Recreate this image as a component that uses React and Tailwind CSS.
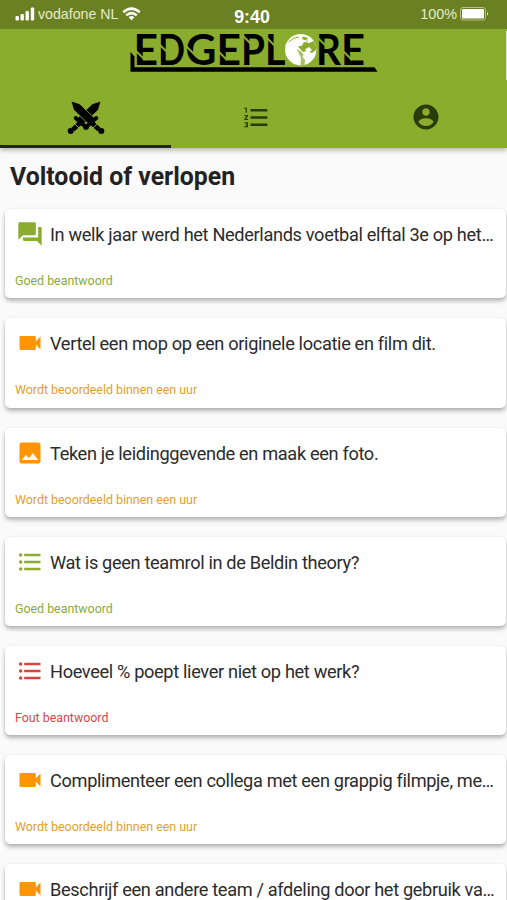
import React from 'react'
import { MdForum, MdFormatListBulleted, MdFormatListNumbered, MdImage, MdVideocam } from 'react-icons/md'

const GOOD = { label: 'Goed beantwoord', text: 'text-[#8aac37]', icon: 'text-[#8aad2f]' }
const PENDING = { label: 'Wordt beoordeeld binnen een uur', text: 'text-[#e2a02e]', icon: 'text-[#fd9602]' }
const WRONG = { label: 'Fout beantwoord', text: 'text-[#d3494b]', icon: 'text-[#d2473f]' }

const questions = [
  { title: 'In welk jaar werd het Nederlands voetbal elftal 3e op het…', Icon: MdForum, status: GOOD },
  { title: 'Vertel een mop op een originele locatie en film dit.', Icon: MdVideocam, status: PENDING },
  { title: 'Teken je leidinggevende en maak een foto.', Icon: MdImage, status: PENDING },
  { title: 'Wat is geen teamrol in de Beldin theory?', Icon: MdFormatListBulleted, status: GOOD },
  { title: 'Hoeveel % poept liever niet op het werk?', Icon: MdFormatListBulleted, status: WRONG },
  { title: 'Complimenteer een collega met een grappig filmpje, me…', Icon: MdVideocam, status: PENDING },
  { title: 'Beschrijf een andere team / afdeling door het gebruik va…', Icon: MdVideocam, status: PENDING },
]

// letter, x, advance width
const letters = [
  ['E', 133.5, 24.5],
  ['D', 158, 27],
  ['G', 185.5, 31],
  ['E', 216.5, 24.5],
  ['P', 241, 24],
  ['L', 265, 20.5],
  ['R', 316, 25],
  ['E', 341, 24],
]

function Wifi() {
  return <svg width="19" height="14" viewBox="0 0 19 14" fill="none" stroke="white" strokeWidth="2.5">
    <path d="M1.2 5.2Q9.5-2 17.8 5.2" />
    <path d="M4.2 8.4Q9.5 3.8 14.8 8.4" />
    <path d="M6.6 10.2Q9.5 7.9 12.4 10.2L9.5 13.3Z" fill="white" stroke="none" />
  </svg>
}

function StatusBar() {
  return <div className="grid h-[29px] grid-cols-3 items-center bg-[#6a8123] font-['Liberation_Sans',sans-serif] text-white">
    <div className="flex items-center pl-[15px]">
      <svg width="20" height="14" viewBox="0 0 20 14" fill="white">
        <rect x="0.5" y="9" width="3.4" height="4.4" rx="1" />
        <rect x="5.5" y="7" width="3.4" height="6.4" rx="1" />
        <rect x="10.5" y="4" width="3.4" height="9.4" rx="1" />
        <rect x="15.8" y="0.5" width="3.4" height="12.9" rx="1" />
      </svg>
      <span className="ml-[3px] mr-[4px] whitespace-nowrap text-[14.2px] text-[#e4eacb]">vodafone NL</span>
      <Wifi />
    </div>
    <span className="pt-[5px] pr-[3px] text-center text-[17.8px] leading-5 font-bold">9:40</span>
    <div className="flex items-center justify-end pr-[18px]">
      <span className="mr-[3px] text-[14.4px] text-[#e4eacb]">100%</span>
      <svg width="29" height="14" viewBox="0 0 29 14">
        <rect x="0.5" y="0.5" width="25" height="12.5" rx="2.5" fill="none" stroke="#b4c188" />
        <rect x="2" y="2" width="22" height="9.5" rx="1" fill="white" />
        <path d="M27 4.8Q29 6.8 27 8.8Z" fill="#e4eacb" />
      </svg>
    </div>
  </div>
}

function Logo() {
  return <svg className="ml-[130px] block overflow-visible" width="250" height="44" viewBox="130 29 250 44">
    {letters.map(([char, x, width]) => (
      <text key={x} x={x} y="65" textLength={width} lengthAdjust="spacingAndGlyphs" className="font-[Lato] text-[41.5px] font-bold">{char}</text>
    ))}
    {/* stencil cuts */}
    <path
      d="M134 49l11 11M158 43l12 12M185 45l11 11M216 49l11 11M241 34l10 10M265 36l10 10M316 36l10 10M341 49l11 11"
      stroke="#8aad2e"
      strokeWidth="1.8"
    />
    <path d="M130.5 52L134.5 56.5V67.3H374.5L377.5 71.8H130.5Z" />
    <circle cx="300.7" cy="49.7" r="15.7" fill="white" />
    <g fill="#8aad2e">
      <path d="M298 46.5L302 45.5 304 42 309 43 314 41 316 46 316 50 312 53 307 51 303 52 301 50Z" />
      <path d="M297 49L301 51.5 303.5 54 302.5 57 305 60 304.5 65.5 300.5 65 301 58 299 54Z" opacity=".75" />
      <path d="M303 36.5L308 38 306 40.5 302 39Z" />
    </g>
    <path d="M288.5 42Q293 37.5 299 37M305 44L307.5 40.5" stroke="#8aad2e" fill="none" />
    <path d="M305 49.5L309 47 312 50 308 53Z" fill="white" />
  </svg>
}

function Sword() {
  return <>
    <path d="M70.5 100.5L79 103.3 94 117.5 88 123.5 73.2 109.5Z" stroke="#8aad2e" strokeWidth="0.8" />
    <path d="M84.7 127.2L95.8 117.5" stroke="black" strokeWidth="4" strokeLinecap="round" />
    <path d="M91.5 122.5L98.5 129" stroke="black" strokeWidth="4.8" />
    <path d="M92.5 127.5L97.5 122.5" stroke="#8aad2e" strokeWidth="1" />
    <circle cx="100.8" cy="130.5" r="3" />
  </>
}

function Swords() {
  return <svg width="38" height="36" viewBox="66.5 98.5 38 36">
    <g transform="translate(171 0) scale(-1 1)"><Sword /></g>
    <Sword />
  </svg>
}

function Account() {
  return <svg width="30" height="30" viewBox="0 0 24 24" fill="currentColor">
    <path d="M12 2C6.48 2 2 6.48 2 12s4.48 10 10 10 10-4.48 10-10S17.52 2 12 2zm0 3c1.66 0 3 1.34 3 3s-1.34 3-3 3-3-1.34-3-3 1.34-3 3-3zm0 14.2c-2.5 0-4.71-1.28-6-3.22.03-1.99 4-3.08 6-3.08 1.99 0 5.97 1.09 6 3.08-1.29 1.94-3.5 3.22-6 3.22z" />
  </svg>
}

function Tabs() {
  return <nav className="grid h-[75px] grid-cols-[171px_170px_170px] text-[#293c0b]">
    <div className="flex items-center justify-center border-b-[3px] border-[#22280f] pt-[15px]"><Swords /></div>
    <div className="flex items-center justify-center pt-[13px]"><MdFormatListNumbered size={29} /></div>
    <div className="flex items-center justify-center pt-[13px]"><Account /></div>
  </nav>
}

function Card({ title, Icon, status }) {
  return <li className="h-[89.2px] rounded-[5px] bg-white pl-2.5 pt-[11px] shadow-[0_3px_4px_rgba(0,0,0,0.28),0_0_2px_rgba(0,0,0,0.08)]">
    <div className="flex h-7 items-center">
      <Icon size={28} className={`ml-[1px] shrink-0 ${status.icon}`} />
      <p className="ml-1.5 whitespace-nowrap pt-px text-[18.2px] tracking-[-0.345px] text-[#2b2b2b]">{title}</p>
    </div>
    <p className={`mt-[23px] text-[12.4px] leading-5 ${status.text}`}>{status.label}</p>
  </li>
}

export default function App() {
  return <div className="h-[900px] w-[507px] overflow-hidden bg-[#fafafa] font-[Roboto,sans-serif]">
    <header className="relative h-[148px] bg-[#8aad2e] shadow-[0_2px_5px_rgba(0,0,0,0.3)]">
      <StatusBar />
      <Logo />
      <Tabs />
      <span className="absolute right-0 top-[31px] h-[49px] w-px bg-[#dfe8c6]" />
    </header>
    <main className="pl-[5px] pr-px">
      <h1 className="h-[61.3px] pl-[5px] pt-[11px] text-[24.85px] leading-9 font-bold text-[#222]">Voltooid of verlopen</h1>
      <ul className="flex flex-col gap-5">
        {questions.map(q => <Card key={q.title} {...q} />)}
      </ul>
    </main>
  </div>
}
